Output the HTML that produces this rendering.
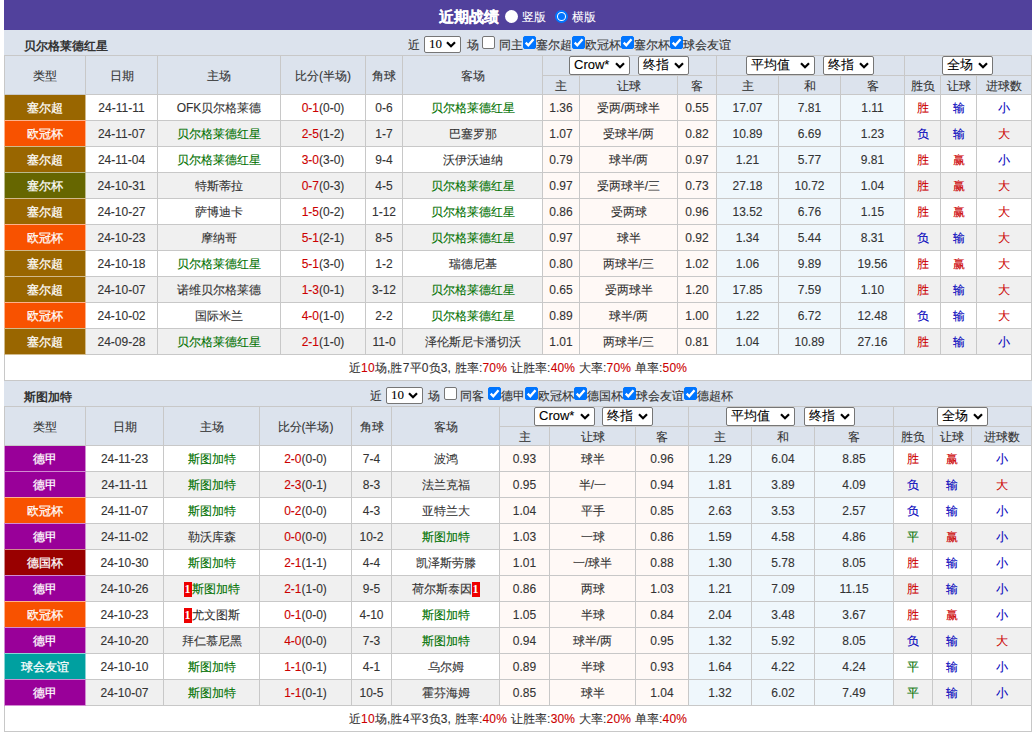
<!DOCTYPE html><html><head><meta charset="utf-8"><style>
*{margin:0;padding:0;box-sizing:border-box}
html,body{width:1034px;height:734px;overflow:hidden;background:#fff}
body{position:relative;font-family:"Liberation Sans",sans-serif;font-size:12px;color:#333;-webkit-text-stroke:0.1px currentColor}
.a{position:absolute}
.c{position:absolute;display:flex;align-items:center;justify-content:center;white-space:nowrap;line-height:14px}
.t{position:absolute;white-space:nowrap;line-height:16px}
.sel{position:absolute;background:#fff;border:1px solid #767676;border-radius:2px;font-size:13px;line-height:16px;color:#000}
.sel svg{display:block}
.cb{position:absolute;width:13px;height:13px;border:1px solid #767676;border-radius:2px;background:#fff}
.cb.on{background:#0075ff;border-color:#0075ff}
.cb svg{position:absolute;left:-1px;top:-1px}
.rc{display:inline-block;background:#e00;color:#fff;font-weight:bold;font-family:'Liberation Serif',serif;width:8px;text-align:center;line-height:15px;height:14px;vertical-align:top;box-shadow:0 1px 0 #e00;-webkit-text-stroke:0}
</style></head><body>
<div class="a" style="left:4px;top:0px;width:1028px;height:30px;background:#51419c;"></div>
<div class="t" style="left:439px;top:8px;font-size:15px;font-weight:bold;color:#fff;line-height:18px;-webkit-text-stroke:0.2px #fff;">近期战绩</div>
<div class="a" style="left:505px;top:10px;width:13px;height:13px;border-radius:50%;background:#fff"></div>
<div class="t" style="left:522px;top:9px;color:#fff;">竖版</div>
<div class="a" style="left:555px;top:10px;width:13px;height:13px;border-radius:50%;background:#fff;border:2px solid #0075ff"><div class="a" style="left:1px;top:1px;width:7px;height:7px;border-radius:50%;background:#0075ff"></div></div>
<div class="t" style="left:572px;top:9px;color:#fff;">横版</div>
<div class="a" style="left:4px;top:30px;width:1028px;height:25px;background:#dce3ed;"></div>
<div class="t" style="left:24px;top:38px;font-weight:bold;-webkit-text-stroke:0;">贝尔格莱德红星</div>
<div class="t" style="left:408px;top:37px;">近</div>
<div class="sel" style="left:424px;top:36px;width:37px;height:17px;font-family:'Liberation Serif',serif;"><span style="position:absolute;left:4px;top:-1px">10</span><svg style="position:absolute;right:4px;top:4px" width="10" height="7" viewBox="0 0 10 7"><path d="M1 1.3 L5 5.3 L9 1.3" fill="none" stroke="#000" stroke-width="2.2"/></svg></div>
<div class="t" style="left:467px;top:37px;">场</div>
<div class="cb" style="left:482px;top:36px"></div>
<div class="t" style="left:499px;top:37px;">同主</div>
<div class="cb on" style="left:523px;top:36px"><svg width="13" height="13" viewBox="0 0 13 13"><path d="M2.7 6.6 L5.3 9.3 L10.5 3.2" fill="none" stroke="#fff" stroke-width="2.3"/></svg></div>
<div class="t" style="left:536px;top:37px;">塞尔超</div>
<div class="cb on" style="left:572px;top:36px"><svg width="13" height="13" viewBox="0 0 13 13"><path d="M2.7 6.6 L5.3 9.3 L10.5 3.2" fill="none" stroke="#fff" stroke-width="2.3"/></svg></div>
<div class="t" style="left:585px;top:37px;">欧冠杯</div>
<div class="cb on" style="left:621px;top:36px"><svg width="13" height="13" viewBox="0 0 13 13"><path d="M2.7 6.6 L5.3 9.3 L10.5 3.2" fill="none" stroke="#fff" stroke-width="2.3"/></svg></div>
<div class="t" style="left:634px;top:37px;">塞尔杯</div>
<div class="cb on" style="left:670px;top:36px"><svg width="13" height="13" viewBox="0 0 13 13"><path d="M2.7 6.6 L5.3 9.3 L10.5 3.2" fill="none" stroke="#fff" stroke-width="2.3"/></svg></div>
<div class="t" style="left:683px;top:37px;">球会友谊</div>
<div class="a" style="left:4px;top:55px;width:1028px;height:39px;background:#dce3ed;"></div>
<div class="c" style="left:5px;top:95px;width:80px;height:25px;background:#996600;color:#fff;-webkit-text-stroke:0.25px #fff;"><span>塞尔超</span></div>
<div class="c" style="left:86px;top:95px;width:71px;height:25px;background:#fff;"><span>24-11-11</span></div>
<div class="c" style="left:158px;top:95px;width:122px;height:25px;background:#fff;"><span>OFK贝尔格莱德</span></div>
<div class="c" style="left:281px;top:95px;width:84px;height:25px;background:#fff;"><span><span style="color:#cc0000">0-1</span>(0-0)</span></div>
<div class="c" style="left:366px;top:95px;width:36px;height:25px;background:#fff;"><span>0-6</span></div>
<div class="c" style="left:403px;top:95px;width:139px;height:25px;background:#fff;"><span><span style="color:#007000">贝尔格莱德红星</span></span></div>
<div class="c" style="left:543px;top:95px;width:36px;height:25px;background:#fff9f6;"><span>1.36</span></div>
<div class="c" style="left:580px;top:95px;width:97px;height:25px;background:#fff9f6;"><span>受两/两球半</span></div>
<div class="c" style="left:678px;top:95px;width:38px;height:25px;background:#fff9f6;"><span>0.55</span></div>
<div class="c" style="left:717px;top:95px;width:61px;height:25px;background:#eff7fc;"><span>17.07</span></div>
<div class="c" style="left:779px;top:95px;width:61px;height:25px;background:#eff7fc;"><span>7.81</span></div>
<div class="c" style="left:841px;top:95px;width:63px;height:25px;background:#eff7fc;"><span>1.11</span></div>
<div class="c" style="left:905px;top:95px;width:35px;height:25px;background:#fff;"><span><span style="color:#cc0000">胜</span></span></div>
<div class="c" style="left:941px;top:95px;width:35px;height:25px;background:#fff;"><span><span style="color:#0000bb">输</span></span></div>
<div class="c" style="left:977px;top:95px;width:54px;height:25px;background:#fff;"><span><span style="color:#0000bb">小</span></span></div>
<div class="c" style="left:5px;top:121px;width:80px;height:25px;background:#f85200;color:#fff;-webkit-text-stroke:0.25px #fff;"><span>欧冠杯</span></div>
<div class="c" style="left:86px;top:121px;width:71px;height:25px;background:#f0f0f0;"><span>24-11-07</span></div>
<div class="c" style="left:158px;top:121px;width:122px;height:25px;background:#f0f0f0;"><span><span style="color:#007000">贝尔格莱德红星</span></span></div>
<div class="c" style="left:281px;top:121px;width:84px;height:25px;background:#f0f0f0;"><span><span style="color:#cc0000">2-5</span>(1-2)</span></div>
<div class="c" style="left:366px;top:121px;width:36px;height:25px;background:#f0f0f0;"><span>1-7</span></div>
<div class="c" style="left:403px;top:121px;width:139px;height:25px;background:#f0f0f0;"><span>巴塞罗那</span></div>
<div class="c" style="left:543px;top:121px;width:36px;height:25px;background:#fff9f6;"><span>1.07</span></div>
<div class="c" style="left:580px;top:121px;width:97px;height:25px;background:#fff9f6;"><span>受球半/两</span></div>
<div class="c" style="left:678px;top:121px;width:38px;height:25px;background:#fff9f6;"><span>0.82</span></div>
<div class="c" style="left:717px;top:121px;width:61px;height:25px;background:#eff7fc;"><span>10.89</span></div>
<div class="c" style="left:779px;top:121px;width:61px;height:25px;background:#eff7fc;"><span>6.69</span></div>
<div class="c" style="left:841px;top:121px;width:63px;height:25px;background:#eff7fc;"><span>1.23</span></div>
<div class="c" style="left:905px;top:121px;width:35px;height:25px;background:#f0f0f0;"><span><span style="color:#0000bb">负</span></span></div>
<div class="c" style="left:941px;top:121px;width:35px;height:25px;background:#f0f0f0;"><span><span style="color:#0000bb">输</span></span></div>
<div class="c" style="left:977px;top:121px;width:54px;height:25px;background:#f0f0f0;"><span><span style="color:#cc0000">大</span></span></div>
<div class="c" style="left:5px;top:147px;width:80px;height:25px;background:#996600;color:#fff;-webkit-text-stroke:0.25px #fff;"><span>塞尔超</span></div>
<div class="c" style="left:86px;top:147px;width:71px;height:25px;background:#fff;"><span>24-11-04</span></div>
<div class="c" style="left:158px;top:147px;width:122px;height:25px;background:#fff;"><span><span style="color:#007000">贝尔格莱德红星</span></span></div>
<div class="c" style="left:281px;top:147px;width:84px;height:25px;background:#fff;"><span><span style="color:#cc0000">3-0</span>(3-0)</span></div>
<div class="c" style="left:366px;top:147px;width:36px;height:25px;background:#fff;"><span>9-4</span></div>
<div class="c" style="left:403px;top:147px;width:139px;height:25px;background:#fff;"><span>沃伊沃迪纳</span></div>
<div class="c" style="left:543px;top:147px;width:36px;height:25px;background:#fff9f6;"><span>0.79</span></div>
<div class="c" style="left:580px;top:147px;width:97px;height:25px;background:#fff9f6;"><span>球半/两</span></div>
<div class="c" style="left:678px;top:147px;width:38px;height:25px;background:#fff9f6;"><span>0.97</span></div>
<div class="c" style="left:717px;top:147px;width:61px;height:25px;background:#eff7fc;"><span>1.21</span></div>
<div class="c" style="left:779px;top:147px;width:61px;height:25px;background:#eff7fc;"><span>5.77</span></div>
<div class="c" style="left:841px;top:147px;width:63px;height:25px;background:#eff7fc;"><span>9.81</span></div>
<div class="c" style="left:905px;top:147px;width:35px;height:25px;background:#fff;"><span><span style="color:#cc0000">胜</span></span></div>
<div class="c" style="left:941px;top:147px;width:35px;height:25px;background:#fff;"><span><span style="color:#cc0000">赢</span></span></div>
<div class="c" style="left:977px;top:147px;width:54px;height:25px;background:#fff;"><span><span style="color:#0000bb">小</span></span></div>
<div class="c" style="left:5px;top:173px;width:80px;height:25px;background:#666600;color:#fff;-webkit-text-stroke:0.25px #fff;"><span>塞尔杯</span></div>
<div class="c" style="left:86px;top:173px;width:71px;height:25px;background:#f0f0f0;"><span>24-10-31</span></div>
<div class="c" style="left:158px;top:173px;width:122px;height:25px;background:#f0f0f0;"><span>特斯蒂拉</span></div>
<div class="c" style="left:281px;top:173px;width:84px;height:25px;background:#f0f0f0;"><span><span style="color:#cc0000">0-7</span>(0-3)</span></div>
<div class="c" style="left:366px;top:173px;width:36px;height:25px;background:#f0f0f0;"><span>4-5</span></div>
<div class="c" style="left:403px;top:173px;width:139px;height:25px;background:#f0f0f0;"><span><span style="color:#007000">贝尔格莱德红星</span></span></div>
<div class="c" style="left:543px;top:173px;width:36px;height:25px;background:#fff9f6;"><span>0.97</span></div>
<div class="c" style="left:580px;top:173px;width:97px;height:25px;background:#fff9f6;"><span>受两球半/三</span></div>
<div class="c" style="left:678px;top:173px;width:38px;height:25px;background:#fff9f6;"><span>0.73</span></div>
<div class="c" style="left:717px;top:173px;width:61px;height:25px;background:#eff7fc;"><span>27.18</span></div>
<div class="c" style="left:779px;top:173px;width:61px;height:25px;background:#eff7fc;"><span>10.72</span></div>
<div class="c" style="left:841px;top:173px;width:63px;height:25px;background:#eff7fc;"><span>1.04</span></div>
<div class="c" style="left:905px;top:173px;width:35px;height:25px;background:#f0f0f0;"><span><span style="color:#cc0000">胜</span></span></div>
<div class="c" style="left:941px;top:173px;width:35px;height:25px;background:#f0f0f0;"><span><span style="color:#cc0000">赢</span></span></div>
<div class="c" style="left:977px;top:173px;width:54px;height:25px;background:#f0f0f0;"><span><span style="color:#cc0000">大</span></span></div>
<div class="c" style="left:5px;top:199px;width:80px;height:25px;background:#996600;color:#fff;-webkit-text-stroke:0.25px #fff;"><span>塞尔超</span></div>
<div class="c" style="left:86px;top:199px;width:71px;height:25px;background:#fff;"><span>24-10-27</span></div>
<div class="c" style="left:158px;top:199px;width:122px;height:25px;background:#fff;"><span>萨博迪卡</span></div>
<div class="c" style="left:281px;top:199px;width:84px;height:25px;background:#fff;"><span><span style="color:#cc0000">1-5</span>(0-2)</span></div>
<div class="c" style="left:366px;top:199px;width:36px;height:25px;background:#fff;"><span>1-12</span></div>
<div class="c" style="left:403px;top:199px;width:139px;height:25px;background:#fff;"><span><span style="color:#007000">贝尔格莱德红星</span></span></div>
<div class="c" style="left:543px;top:199px;width:36px;height:25px;background:#fff9f6;"><span>0.86</span></div>
<div class="c" style="left:580px;top:199px;width:97px;height:25px;background:#fff9f6;"><span>受两球</span></div>
<div class="c" style="left:678px;top:199px;width:38px;height:25px;background:#fff9f6;"><span>0.96</span></div>
<div class="c" style="left:717px;top:199px;width:61px;height:25px;background:#eff7fc;"><span>13.52</span></div>
<div class="c" style="left:779px;top:199px;width:61px;height:25px;background:#eff7fc;"><span>6.76</span></div>
<div class="c" style="left:841px;top:199px;width:63px;height:25px;background:#eff7fc;"><span>1.15</span></div>
<div class="c" style="left:905px;top:199px;width:35px;height:25px;background:#fff;"><span><span style="color:#cc0000">胜</span></span></div>
<div class="c" style="left:941px;top:199px;width:35px;height:25px;background:#fff;"><span><span style="color:#cc0000">赢</span></span></div>
<div class="c" style="left:977px;top:199px;width:54px;height:25px;background:#fff;"><span><span style="color:#cc0000">大</span></span></div>
<div class="c" style="left:5px;top:225px;width:80px;height:25px;background:#f85200;color:#fff;-webkit-text-stroke:0.25px #fff;"><span>欧冠杯</span></div>
<div class="c" style="left:86px;top:225px;width:71px;height:25px;background:#f0f0f0;"><span>24-10-23</span></div>
<div class="c" style="left:158px;top:225px;width:122px;height:25px;background:#f0f0f0;"><span>摩纳哥</span></div>
<div class="c" style="left:281px;top:225px;width:84px;height:25px;background:#f0f0f0;"><span><span style="color:#cc0000">5-1</span>(2-1)</span></div>
<div class="c" style="left:366px;top:225px;width:36px;height:25px;background:#f0f0f0;"><span>8-5</span></div>
<div class="c" style="left:403px;top:225px;width:139px;height:25px;background:#f0f0f0;"><span><span style="color:#007000">贝尔格莱德红星</span></span></div>
<div class="c" style="left:543px;top:225px;width:36px;height:25px;background:#fff9f6;"><span>0.97</span></div>
<div class="c" style="left:580px;top:225px;width:97px;height:25px;background:#fff9f6;"><span>球半</span></div>
<div class="c" style="left:678px;top:225px;width:38px;height:25px;background:#fff9f6;"><span>0.92</span></div>
<div class="c" style="left:717px;top:225px;width:61px;height:25px;background:#eff7fc;"><span>1.34</span></div>
<div class="c" style="left:779px;top:225px;width:61px;height:25px;background:#eff7fc;"><span>5.44</span></div>
<div class="c" style="left:841px;top:225px;width:63px;height:25px;background:#eff7fc;"><span>8.31</span></div>
<div class="c" style="left:905px;top:225px;width:35px;height:25px;background:#f0f0f0;"><span><span style="color:#0000bb">负</span></span></div>
<div class="c" style="left:941px;top:225px;width:35px;height:25px;background:#f0f0f0;"><span><span style="color:#0000bb">输</span></span></div>
<div class="c" style="left:977px;top:225px;width:54px;height:25px;background:#f0f0f0;"><span><span style="color:#cc0000">大</span></span></div>
<div class="c" style="left:5px;top:251px;width:80px;height:25px;background:#996600;color:#fff;-webkit-text-stroke:0.25px #fff;"><span>塞尔超</span></div>
<div class="c" style="left:86px;top:251px;width:71px;height:25px;background:#fff;"><span>24-10-18</span></div>
<div class="c" style="left:158px;top:251px;width:122px;height:25px;background:#fff;"><span><span style="color:#007000">贝尔格莱德红星</span></span></div>
<div class="c" style="left:281px;top:251px;width:84px;height:25px;background:#fff;"><span><span style="color:#cc0000">5-1</span>(3-0)</span></div>
<div class="c" style="left:366px;top:251px;width:36px;height:25px;background:#fff;"><span>1-2</span></div>
<div class="c" style="left:403px;top:251px;width:139px;height:25px;background:#fff;"><span>瑞德尼基</span></div>
<div class="c" style="left:543px;top:251px;width:36px;height:25px;background:#fff9f6;"><span>0.80</span></div>
<div class="c" style="left:580px;top:251px;width:97px;height:25px;background:#fff9f6;"><span>两球半/三</span></div>
<div class="c" style="left:678px;top:251px;width:38px;height:25px;background:#fff9f6;"><span>1.02</span></div>
<div class="c" style="left:717px;top:251px;width:61px;height:25px;background:#eff7fc;"><span>1.06</span></div>
<div class="c" style="left:779px;top:251px;width:61px;height:25px;background:#eff7fc;"><span>9.89</span></div>
<div class="c" style="left:841px;top:251px;width:63px;height:25px;background:#eff7fc;"><span>19.56</span></div>
<div class="c" style="left:905px;top:251px;width:35px;height:25px;background:#fff;"><span><span style="color:#cc0000">胜</span></span></div>
<div class="c" style="left:941px;top:251px;width:35px;height:25px;background:#fff;"><span><span style="color:#cc0000">赢</span></span></div>
<div class="c" style="left:977px;top:251px;width:54px;height:25px;background:#fff;"><span><span style="color:#cc0000">大</span></span></div>
<div class="c" style="left:5px;top:277px;width:80px;height:25px;background:#996600;color:#fff;-webkit-text-stroke:0.25px #fff;"><span>塞尔超</span></div>
<div class="c" style="left:86px;top:277px;width:71px;height:25px;background:#f0f0f0;"><span>24-10-07</span></div>
<div class="c" style="left:158px;top:277px;width:122px;height:25px;background:#f0f0f0;"><span>诺维贝尔格莱德</span></div>
<div class="c" style="left:281px;top:277px;width:84px;height:25px;background:#f0f0f0;"><span><span style="color:#cc0000">1-3</span>(0-1)</span></div>
<div class="c" style="left:366px;top:277px;width:36px;height:25px;background:#f0f0f0;"><span>3-12</span></div>
<div class="c" style="left:403px;top:277px;width:139px;height:25px;background:#f0f0f0;"><span><span style="color:#007000">贝尔格莱德红星</span></span></div>
<div class="c" style="left:543px;top:277px;width:36px;height:25px;background:#fff9f6;"><span>0.65</span></div>
<div class="c" style="left:580px;top:277px;width:97px;height:25px;background:#fff9f6;"><span>受两球半</span></div>
<div class="c" style="left:678px;top:277px;width:38px;height:25px;background:#fff9f6;"><span>1.20</span></div>
<div class="c" style="left:717px;top:277px;width:61px;height:25px;background:#eff7fc;"><span>17.85</span></div>
<div class="c" style="left:779px;top:277px;width:61px;height:25px;background:#eff7fc;"><span>7.59</span></div>
<div class="c" style="left:841px;top:277px;width:63px;height:25px;background:#eff7fc;"><span>1.10</span></div>
<div class="c" style="left:905px;top:277px;width:35px;height:25px;background:#f0f0f0;"><span><span style="color:#cc0000">胜</span></span></div>
<div class="c" style="left:941px;top:277px;width:35px;height:25px;background:#f0f0f0;"><span><span style="color:#0000bb">输</span></span></div>
<div class="c" style="left:977px;top:277px;width:54px;height:25px;background:#f0f0f0;"><span><span style="color:#cc0000">大</span></span></div>
<div class="c" style="left:5px;top:303px;width:80px;height:25px;background:#f85200;color:#fff;-webkit-text-stroke:0.25px #fff;"><span>欧冠杯</span></div>
<div class="c" style="left:86px;top:303px;width:71px;height:25px;background:#fff;"><span>24-10-02</span></div>
<div class="c" style="left:158px;top:303px;width:122px;height:25px;background:#fff;"><span>国际米兰</span></div>
<div class="c" style="left:281px;top:303px;width:84px;height:25px;background:#fff;"><span><span style="color:#cc0000">4-0</span>(1-0)</span></div>
<div class="c" style="left:366px;top:303px;width:36px;height:25px;background:#fff;"><span>2-2</span></div>
<div class="c" style="left:403px;top:303px;width:139px;height:25px;background:#fff;"><span><span style="color:#007000">贝尔格莱德红星</span></span></div>
<div class="c" style="left:543px;top:303px;width:36px;height:25px;background:#fff9f6;"><span>0.89</span></div>
<div class="c" style="left:580px;top:303px;width:97px;height:25px;background:#fff9f6;"><span>球半/两</span></div>
<div class="c" style="left:678px;top:303px;width:38px;height:25px;background:#fff9f6;"><span>1.00</span></div>
<div class="c" style="left:717px;top:303px;width:61px;height:25px;background:#eff7fc;"><span>1.22</span></div>
<div class="c" style="left:779px;top:303px;width:61px;height:25px;background:#eff7fc;"><span>6.72</span></div>
<div class="c" style="left:841px;top:303px;width:63px;height:25px;background:#eff7fc;"><span>12.48</span></div>
<div class="c" style="left:905px;top:303px;width:35px;height:25px;background:#fff;"><span><span style="color:#0000bb">负</span></span></div>
<div class="c" style="left:941px;top:303px;width:35px;height:25px;background:#fff;"><span><span style="color:#0000bb">输</span></span></div>
<div class="c" style="left:977px;top:303px;width:54px;height:25px;background:#fff;"><span><span style="color:#cc0000">大</span></span></div>
<div class="c" style="left:5px;top:329px;width:80px;height:25px;background:#996600;color:#fff;-webkit-text-stroke:0.25px #fff;"><span>塞尔超</span></div>
<div class="c" style="left:86px;top:329px;width:71px;height:25px;background:#f0f0f0;"><span>24-09-28</span></div>
<div class="c" style="left:158px;top:329px;width:122px;height:25px;background:#f0f0f0;"><span><span style="color:#007000">贝尔格莱德红星</span></span></div>
<div class="c" style="left:281px;top:329px;width:84px;height:25px;background:#f0f0f0;"><span><span style="color:#cc0000">2-1</span>(1-0)</span></div>
<div class="c" style="left:366px;top:329px;width:36px;height:25px;background:#f0f0f0;"><span>11-0</span></div>
<div class="c" style="left:403px;top:329px;width:139px;height:25px;background:#f0f0f0;"><span>泽伦斯尼卡潘切沃</span></div>
<div class="c" style="left:543px;top:329px;width:36px;height:25px;background:#fff9f6;"><span>1.01</span></div>
<div class="c" style="left:580px;top:329px;width:97px;height:25px;background:#fff9f6;"><span>两球半/三</span></div>
<div class="c" style="left:678px;top:329px;width:38px;height:25px;background:#fff9f6;"><span>0.81</span></div>
<div class="c" style="left:717px;top:329px;width:61px;height:25px;background:#eff7fc;"><span>1.04</span></div>
<div class="c" style="left:779px;top:329px;width:61px;height:25px;background:#eff7fc;"><span>10.89</span></div>
<div class="c" style="left:841px;top:329px;width:63px;height:25px;background:#eff7fc;"><span>27.16</span></div>
<div class="c" style="left:905px;top:329px;width:35px;height:25px;background:#f0f0f0;"><span><span style="color:#cc0000">胜</span></span></div>
<div class="c" style="left:941px;top:329px;width:35px;height:25px;background:#f0f0f0;"><span><span style="color:#0000bb">输</span></span></div>
<div class="c" style="left:977px;top:329px;width:54px;height:25px;background:#f0f0f0;"><span><span style="color:#0000bb">小</span></span></div>
<div class="c" style="left:5px;top:355px;width:1026px;height:25px;background:#fff;letter-spacing:0.18px"><span>近<span style="color:#cc0000">10</span>场,胜7平0负3, 胜率:<span style="color:#cc0000">70%</span> 让胜率:<span style="color:#cc0000">40%</span> 大率:<span style="color:#cc0000">70%</span> 单率:<span style="color:#cc0000">50%</span></span></div>
<div class="a" style="left:4px;top:55px;width:1028px;height:1px;background:#c8c8c8;"></div>
<div class="a" style="left:542px;top:75px;width:489px;height:1px;background:#c8c8c8;"></div>
<div class="a" style="left:4px;top:94px;width:1028px;height:1px;background:#c8c8c8;"></div>
<div class="a" style="left:4px;top:120px;width:1028px;height:1px;background:#c8c8c8;"></div>
<div class="a" style="left:4px;top:146px;width:1028px;height:1px;background:#c8c8c8;"></div>
<div class="a" style="left:4px;top:172px;width:1028px;height:1px;background:#c8c8c8;"></div>
<div class="a" style="left:4px;top:198px;width:1028px;height:1px;background:#c8c8c8;"></div>
<div class="a" style="left:4px;top:224px;width:1028px;height:1px;background:#c8c8c8;"></div>
<div class="a" style="left:4px;top:250px;width:1028px;height:1px;background:#c8c8c8;"></div>
<div class="a" style="left:4px;top:276px;width:1028px;height:1px;background:#c8c8c8;"></div>
<div class="a" style="left:4px;top:302px;width:1028px;height:1px;background:#c8c8c8;"></div>
<div class="a" style="left:4px;top:328px;width:1028px;height:1px;background:#c8c8c8;"></div>
<div class="a" style="left:4px;top:354px;width:1028px;height:1px;background:#c8c8c8;"></div>
<div class="a" style="left:4px;top:380px;width:1028px;height:1px;background:#c8c8c8;"></div>
<div class="a" style="left:4px;top:55px;width:1px;height:326px;background:#c8c8c8;"></div>
<div class="a" style="left:85px;top:55px;width:1px;height:300px;background:#c8c8c8;"></div>
<div class="a" style="left:157px;top:55px;width:1px;height:300px;background:#c8c8c8;"></div>
<div class="a" style="left:280px;top:55px;width:1px;height:300px;background:#c8c8c8;"></div>
<div class="a" style="left:365px;top:55px;width:1px;height:300px;background:#c8c8c8;"></div>
<div class="a" style="left:402px;top:55px;width:1px;height:300px;background:#c8c8c8;"></div>
<div class="a" style="left:542px;top:55px;width:1px;height:300px;background:#c8c8c8;"></div>
<div class="a" style="left:579px;top:75px;width:1px;height:280px;background:#c8c8c8;"></div>
<div class="a" style="left:677px;top:75px;width:1px;height:280px;background:#c8c8c8;"></div>
<div class="a" style="left:716px;top:55px;width:1px;height:300px;background:#c8c8c8;"></div>
<div class="a" style="left:778px;top:75px;width:1px;height:280px;background:#c8c8c8;"></div>
<div class="a" style="left:840px;top:75px;width:1px;height:280px;background:#c8c8c8;"></div>
<div class="a" style="left:904px;top:55px;width:1px;height:300px;background:#c8c8c8;"></div>
<div class="a" style="left:940px;top:75px;width:1px;height:280px;background:#c8c8c8;"></div>
<div class="a" style="left:976px;top:75px;width:1px;height:280px;background:#c8c8c8;"></div>
<div class="a" style="left:1031px;top:55px;width:1px;height:326px;background:#c8c8c8;"></div>
<div class="a" style="left:4px;top:95px;width:1px;height:26px;background:#d1ba8c;"></div>
<div class="a" style="left:85px;top:95px;width:1px;height:26px;background:#d1ba8c;"></div>
<div class="a" style="left:4px;top:120px;width:82px;height:1px;background:#d1ba8c;"></div>
<div class="a" style="left:4px;top:121px;width:1px;height:26px;background:#fcb18c;"></div>
<div class="a" style="left:85px;top:121px;width:1px;height:26px;background:#fcb18c;"></div>
<div class="a" style="left:4px;top:120px;width:82px;height:1px;background:#fcb18c;"></div>
<div class="a" style="left:4px;top:146px;width:82px;height:1px;background:#fcb18c;"></div>
<div class="a" style="left:4px;top:147px;width:1px;height:26px;background:#d1ba8c;"></div>
<div class="a" style="left:85px;top:147px;width:1px;height:26px;background:#d1ba8c;"></div>
<div class="a" style="left:4px;top:146px;width:82px;height:1px;background:#d1ba8c;"></div>
<div class="a" style="left:4px;top:172px;width:82px;height:1px;background:#d1ba8c;"></div>
<div class="a" style="left:4px;top:173px;width:1px;height:26px;background:#baba8c;"></div>
<div class="a" style="left:85px;top:173px;width:1px;height:26px;background:#baba8c;"></div>
<div class="a" style="left:4px;top:172px;width:82px;height:1px;background:#baba8c;"></div>
<div class="a" style="left:4px;top:198px;width:82px;height:1px;background:#baba8c;"></div>
<div class="a" style="left:4px;top:199px;width:1px;height:26px;background:#d1ba8c;"></div>
<div class="a" style="left:85px;top:199px;width:1px;height:26px;background:#d1ba8c;"></div>
<div class="a" style="left:4px;top:198px;width:82px;height:1px;background:#d1ba8c;"></div>
<div class="a" style="left:4px;top:224px;width:82px;height:1px;background:#d1ba8c;"></div>
<div class="a" style="left:4px;top:225px;width:1px;height:26px;background:#fcb18c;"></div>
<div class="a" style="left:85px;top:225px;width:1px;height:26px;background:#fcb18c;"></div>
<div class="a" style="left:4px;top:224px;width:82px;height:1px;background:#fcb18c;"></div>
<div class="a" style="left:4px;top:250px;width:82px;height:1px;background:#fcb18c;"></div>
<div class="a" style="left:4px;top:251px;width:1px;height:26px;background:#d1ba8c;"></div>
<div class="a" style="left:85px;top:251px;width:1px;height:26px;background:#d1ba8c;"></div>
<div class="a" style="left:4px;top:250px;width:82px;height:1px;background:#d1ba8c;"></div>
<div class="a" style="left:4px;top:276px;width:82px;height:1px;background:#d1ba8c;"></div>
<div class="a" style="left:4px;top:277px;width:1px;height:26px;background:#d1ba8c;"></div>
<div class="a" style="left:85px;top:277px;width:1px;height:26px;background:#d1ba8c;"></div>
<div class="a" style="left:4px;top:276px;width:82px;height:1px;background:#d1ba8c;"></div>
<div class="a" style="left:4px;top:302px;width:82px;height:1px;background:#d1ba8c;"></div>
<div class="a" style="left:4px;top:303px;width:1px;height:26px;background:#fcb18c;"></div>
<div class="a" style="left:85px;top:303px;width:1px;height:26px;background:#fcb18c;"></div>
<div class="a" style="left:4px;top:302px;width:82px;height:1px;background:#fcb18c;"></div>
<div class="a" style="left:4px;top:328px;width:82px;height:1px;background:#fcb18c;"></div>
<div class="a" style="left:4px;top:329px;width:1px;height:26px;background:#d1ba8c;"></div>
<div class="a" style="left:85px;top:329px;width:1px;height:26px;background:#d1ba8c;"></div>
<div class="a" style="left:4px;top:328px;width:82px;height:1px;background:#d1ba8c;"></div>
<div class="a" style="left:4px;top:354px;width:82px;height:1px;background:#d1ba8c;"></div>
<div class="c" style="left:5px;top:56px;width:80px;height:38px;padding-top:1px"><span>类型</span></div>
<div class="c" style="left:86px;top:56px;width:71px;height:38px;padding-top:1px"><span>日期</span></div>
<div class="c" style="left:158px;top:56px;width:122px;height:38px;padding-top:1px"><span>主场</span></div>
<div class="c" style="left:281px;top:56px;width:84px;height:38px;padding-top:1px"><span>比分(半场)</span></div>
<div class="c" style="left:366px;top:56px;width:36px;height:38px;padding-top:1px"><span>角球</span></div>
<div class="c" style="left:403px;top:56px;width:139px;height:38px;padding-top:1px"><span>客场</span></div>
<div class="sel" style="left:569px;top:56px;width:61px;height:19px;"><span style="position:absolute;left:4px;top:0px">Crow*</span><svg style="position:absolute;right:4px;top:5px" width="10" height="7" viewBox="0 0 10 7"><path d="M1 1.3 L5 5.3 L9 1.3" fill="none" stroke="#000" stroke-width="2.2"/></svg></div>
<div class="sel" style="left:638px;top:56px;width:51px;height:19px;"><span style="position:absolute;left:4px;top:0px">终指</span><svg style="position:absolute;right:4px;top:5px" width="10" height="7" viewBox="0 0 10 7"><path d="M1 1.3 L5 5.3 L9 1.3" fill="none" stroke="#000" stroke-width="2.2"/></svg></div>
<div class="sel" style="left:746px;top:56px;width:69px;height:19px;"><span style="position:absolute;left:4px;top:0px">平均值</span><svg style="position:absolute;right:4px;top:5px" width="10" height="7" viewBox="0 0 10 7"><path d="M1 1.3 L5 5.3 L9 1.3" fill="none" stroke="#000" stroke-width="2.2"/></svg></div>
<div class="sel" style="left:823px;top:56px;width:51px;height:19px;"><span style="position:absolute;left:4px;top:0px">终指</span><svg style="position:absolute;right:4px;top:5px" width="10" height="7" viewBox="0 0 10 7"><path d="M1 1.3 L5 5.3 L9 1.3" fill="none" stroke="#000" stroke-width="2.2"/></svg></div>
<div class="sel" style="left:942px;top:56px;width:51px;height:19px;"><span style="position:absolute;left:4px;top:0px">全场</span><svg style="position:absolute;right:4px;top:5px" width="10" height="7" viewBox="0 0 10 7"><path d="M1 1.3 L5 5.3 L9 1.3" fill="none" stroke="#000" stroke-width="2.2"/></svg></div>
<div class="c" style="left:543px;top:76px;width:36px;height:18px;padding-top:2px"><span>主</span></div>
<div class="c" style="left:580px;top:76px;width:97px;height:18px;padding-top:2px"><span>让球</span></div>
<div class="c" style="left:678px;top:76px;width:38px;height:18px;padding-top:2px"><span>客</span></div>
<div class="c" style="left:717px;top:76px;width:61px;height:18px;padding-top:2px"><span>主</span></div>
<div class="c" style="left:779px;top:76px;width:61px;height:18px;padding-top:2px"><span>和</span></div>
<div class="c" style="left:841px;top:76px;width:63px;height:18px;padding-top:2px"><span>客</span></div>
<div class="c" style="left:905px;top:76px;width:35px;height:18px;padding-top:2px"><span>胜负</span></div>
<div class="c" style="left:941px;top:76px;width:35px;height:18px;padding-top:2px"><span>让球</span></div>
<div class="c" style="left:977px;top:76px;width:54px;height:18px;padding-top:2px"><span>进球数</span></div>
<div class="a" style="left:4px;top:381px;width:1028px;height:25px;background:#dce3ed;"></div>
<div class="t" style="left:24px;top:389px;font-weight:bold;-webkit-text-stroke:0;">斯图加特</div>
<div class="t" style="left:370px;top:388px;">近</div>
<div class="sel" style="left:386px;top:387px;width:37px;height:17px;font-family:'Liberation Serif',serif;"><span style="position:absolute;left:4px;top:-1px">10</span><svg style="position:absolute;right:4px;top:4px" width="10" height="7" viewBox="0 0 10 7"><path d="M1 1.3 L5 5.3 L9 1.3" fill="none" stroke="#000" stroke-width="2.2"/></svg></div>
<div class="t" style="left:428px;top:388px;">场</div>
<div class="cb" style="left:444px;top:387px"></div>
<div class="t" style="left:460px;top:388px;">同客</div>
<div class="cb on" style="left:488px;top:387px"><svg width="13" height="13" viewBox="0 0 13 13"><path d="M2.7 6.6 L5.3 9.3 L10.5 3.2" fill="none" stroke="#fff" stroke-width="2.3"/></svg></div>
<div class="t" style="left:501px;top:388px;">德甲</div>
<div class="cb on" style="left:525px;top:387px"><svg width="13" height="13" viewBox="0 0 13 13"><path d="M2.7 6.6 L5.3 9.3 L10.5 3.2" fill="none" stroke="#fff" stroke-width="2.3"/></svg></div>
<div class="t" style="left:538px;top:388px;">欧冠杯</div>
<div class="cb on" style="left:574px;top:387px"><svg width="13" height="13" viewBox="0 0 13 13"><path d="M2.7 6.6 L5.3 9.3 L10.5 3.2" fill="none" stroke="#fff" stroke-width="2.3"/></svg></div>
<div class="t" style="left:587px;top:388px;">德国杯</div>
<div class="cb on" style="left:623px;top:387px"><svg width="13" height="13" viewBox="0 0 13 13"><path d="M2.7 6.6 L5.3 9.3 L10.5 3.2" fill="none" stroke="#fff" stroke-width="2.3"/></svg></div>
<div class="t" style="left:636px;top:388px;">球会友谊</div>
<div class="cb on" style="left:684px;top:387px"><svg width="13" height="13" viewBox="0 0 13 13"><path d="M2.7 6.6 L5.3 9.3 L10.5 3.2" fill="none" stroke="#fff" stroke-width="2.3"/></svg></div>
<div class="t" style="left:697px;top:388px;">德超杯</div>
<div class="a" style="left:4px;top:406px;width:1028px;height:39px;background:#dce3ed;"></div>
<div class="c" style="left:5px;top:446px;width:80px;height:25px;background:#990099;color:#fff;-webkit-text-stroke:0.25px #fff;"><span>德甲</span></div>
<div class="c" style="left:86px;top:446px;width:77px;height:25px;background:#fff;"><span>24-11-23</span></div>
<div class="c" style="left:164px;top:446px;width:95px;height:25px;background:#fff;"><span><span style="color:#007000">斯图加特</span></span></div>
<div class="c" style="left:260px;top:446px;width:91px;height:25px;background:#fff;"><span><span style="color:#cc0000">2-0</span>(0-0)</span></div>
<div class="c" style="left:352px;top:446px;width:39px;height:25px;background:#fff;"><span>7-4</span></div>
<div class="c" style="left:392px;top:446px;width:107px;height:25px;background:#fff;"><span>波鸿</span></div>
<div class="c" style="left:500px;top:446px;width:49px;height:25px;background:#fff9f6;"><span>0.93</span></div>
<div class="c" style="left:550px;top:446px;width:85px;height:25px;background:#fff9f6;"><span>球半</span></div>
<div class="c" style="left:636px;top:446px;width:52px;height:25px;background:#fff9f6;"><span>0.96</span></div>
<div class="c" style="left:689px;top:446px;width:62px;height:25px;background:#eff7fc;"><span>1.29</span></div>
<div class="c" style="left:752px;top:446px;width:62px;height:25px;background:#eff7fc;"><span>6.04</span></div>
<div class="c" style="left:815px;top:446px;width:78px;height:25px;background:#eff7fc;"><span>8.85</span></div>
<div class="c" style="left:894px;top:446px;width:38px;height:25px;background:#fff;"><span><span style="color:#cc0000">胜</span></span></div>
<div class="c" style="left:933px;top:446px;width:38px;height:25px;background:#fff;"><span><span style="color:#cc0000">赢</span></span></div>
<div class="c" style="left:972px;top:446px;width:59px;height:25px;background:#fff;"><span><span style="color:#0000bb">小</span></span></div>
<div class="c" style="left:5px;top:472px;width:80px;height:25px;background:#990099;color:#fff;-webkit-text-stroke:0.25px #fff;"><span>德甲</span></div>
<div class="c" style="left:86px;top:472px;width:77px;height:25px;background:#f0f0f0;"><span>24-11-11</span></div>
<div class="c" style="left:164px;top:472px;width:95px;height:25px;background:#f0f0f0;"><span><span style="color:#007000">斯图加特</span></span></div>
<div class="c" style="left:260px;top:472px;width:91px;height:25px;background:#f0f0f0;"><span><span style="color:#cc0000">2-3</span>(0-1)</span></div>
<div class="c" style="left:352px;top:472px;width:39px;height:25px;background:#f0f0f0;"><span>8-3</span></div>
<div class="c" style="left:392px;top:472px;width:107px;height:25px;background:#f0f0f0;"><span>法兰克福</span></div>
<div class="c" style="left:500px;top:472px;width:49px;height:25px;background:#fff9f6;"><span>0.95</span></div>
<div class="c" style="left:550px;top:472px;width:85px;height:25px;background:#fff9f6;"><span>半/一</span></div>
<div class="c" style="left:636px;top:472px;width:52px;height:25px;background:#fff9f6;"><span>0.94</span></div>
<div class="c" style="left:689px;top:472px;width:62px;height:25px;background:#eff7fc;"><span>1.81</span></div>
<div class="c" style="left:752px;top:472px;width:62px;height:25px;background:#eff7fc;"><span>3.89</span></div>
<div class="c" style="left:815px;top:472px;width:78px;height:25px;background:#eff7fc;"><span>4.09</span></div>
<div class="c" style="left:894px;top:472px;width:38px;height:25px;background:#f0f0f0;"><span><span style="color:#0000bb">负</span></span></div>
<div class="c" style="left:933px;top:472px;width:38px;height:25px;background:#f0f0f0;"><span><span style="color:#0000bb">输</span></span></div>
<div class="c" style="left:972px;top:472px;width:59px;height:25px;background:#f0f0f0;"><span><span style="color:#cc0000">大</span></span></div>
<div class="c" style="left:5px;top:498px;width:80px;height:25px;background:#f85200;color:#fff;-webkit-text-stroke:0.25px #fff;"><span>欧冠杯</span></div>
<div class="c" style="left:86px;top:498px;width:77px;height:25px;background:#fff;"><span>24-11-07</span></div>
<div class="c" style="left:164px;top:498px;width:95px;height:25px;background:#fff;"><span><span style="color:#007000">斯图加特</span></span></div>
<div class="c" style="left:260px;top:498px;width:91px;height:25px;background:#fff;"><span><span style="color:#cc0000">0-2</span>(0-0)</span></div>
<div class="c" style="left:352px;top:498px;width:39px;height:25px;background:#fff;"><span>4-3</span></div>
<div class="c" style="left:392px;top:498px;width:107px;height:25px;background:#fff;"><span>亚特兰大</span></div>
<div class="c" style="left:500px;top:498px;width:49px;height:25px;background:#fff9f6;"><span>1.04</span></div>
<div class="c" style="left:550px;top:498px;width:85px;height:25px;background:#fff9f6;"><span>平手</span></div>
<div class="c" style="left:636px;top:498px;width:52px;height:25px;background:#fff9f6;"><span>0.85</span></div>
<div class="c" style="left:689px;top:498px;width:62px;height:25px;background:#eff7fc;"><span>2.63</span></div>
<div class="c" style="left:752px;top:498px;width:62px;height:25px;background:#eff7fc;"><span>3.53</span></div>
<div class="c" style="left:815px;top:498px;width:78px;height:25px;background:#eff7fc;"><span>2.57</span></div>
<div class="c" style="left:894px;top:498px;width:38px;height:25px;background:#fff;"><span><span style="color:#0000bb">负</span></span></div>
<div class="c" style="left:933px;top:498px;width:38px;height:25px;background:#fff;"><span><span style="color:#0000bb">输</span></span></div>
<div class="c" style="left:972px;top:498px;width:59px;height:25px;background:#fff;"><span><span style="color:#0000bb">小</span></span></div>
<div class="c" style="left:5px;top:524px;width:80px;height:25px;background:#990099;color:#fff;-webkit-text-stroke:0.25px #fff;"><span>德甲</span></div>
<div class="c" style="left:86px;top:524px;width:77px;height:25px;background:#f0f0f0;"><span>24-11-02</span></div>
<div class="c" style="left:164px;top:524px;width:95px;height:25px;background:#f0f0f0;"><span>勒沃库森</span></div>
<div class="c" style="left:260px;top:524px;width:91px;height:25px;background:#f0f0f0;"><span><span style="color:#cc0000">0-0</span>(0-0)</span></div>
<div class="c" style="left:352px;top:524px;width:39px;height:25px;background:#f0f0f0;"><span>10-2</span></div>
<div class="c" style="left:392px;top:524px;width:107px;height:25px;background:#f0f0f0;"><span><span style="color:#007000">斯图加特</span></span></div>
<div class="c" style="left:500px;top:524px;width:49px;height:25px;background:#fff9f6;"><span>1.03</span></div>
<div class="c" style="left:550px;top:524px;width:85px;height:25px;background:#fff9f6;"><span>一球</span></div>
<div class="c" style="left:636px;top:524px;width:52px;height:25px;background:#fff9f6;"><span>0.86</span></div>
<div class="c" style="left:689px;top:524px;width:62px;height:25px;background:#eff7fc;"><span>1.59</span></div>
<div class="c" style="left:752px;top:524px;width:62px;height:25px;background:#eff7fc;"><span>4.58</span></div>
<div class="c" style="left:815px;top:524px;width:78px;height:25px;background:#eff7fc;"><span>4.86</span></div>
<div class="c" style="left:894px;top:524px;width:38px;height:25px;background:#f0f0f0;"><span><span style="color:#007000">平</span></span></div>
<div class="c" style="left:933px;top:524px;width:38px;height:25px;background:#f0f0f0;"><span><span style="color:#cc0000">赢</span></span></div>
<div class="c" style="left:972px;top:524px;width:59px;height:25px;background:#f0f0f0;"><span><span style="color:#0000bb">小</span></span></div>
<div class="c" style="left:5px;top:550px;width:80px;height:25px;background:#990000;color:#fff;-webkit-text-stroke:0.25px #fff;"><span>德国杯</span></div>
<div class="c" style="left:86px;top:550px;width:77px;height:25px;background:#fff;"><span>24-10-30</span></div>
<div class="c" style="left:164px;top:550px;width:95px;height:25px;background:#fff;"><span><span style="color:#007000">斯图加特</span></span></div>
<div class="c" style="left:260px;top:550px;width:91px;height:25px;background:#fff;"><span><span style="color:#cc0000">2-1</span>(1-1)</span></div>
<div class="c" style="left:352px;top:550px;width:39px;height:25px;background:#fff;"><span>4-4</span></div>
<div class="c" style="left:392px;top:550px;width:107px;height:25px;background:#fff;"><span>凯泽斯劳滕</span></div>
<div class="c" style="left:500px;top:550px;width:49px;height:25px;background:#fff9f6;"><span>1.01</span></div>
<div class="c" style="left:550px;top:550px;width:85px;height:25px;background:#fff9f6;"><span>一/球半</span></div>
<div class="c" style="left:636px;top:550px;width:52px;height:25px;background:#fff9f6;"><span>0.88</span></div>
<div class="c" style="left:689px;top:550px;width:62px;height:25px;background:#eff7fc;"><span>1.30</span></div>
<div class="c" style="left:752px;top:550px;width:62px;height:25px;background:#eff7fc;"><span>5.78</span></div>
<div class="c" style="left:815px;top:550px;width:78px;height:25px;background:#eff7fc;"><span>8.05</span></div>
<div class="c" style="left:894px;top:550px;width:38px;height:25px;background:#fff;"><span><span style="color:#cc0000">胜</span></span></div>
<div class="c" style="left:933px;top:550px;width:38px;height:25px;background:#fff;"><span><span style="color:#0000bb">输</span></span></div>
<div class="c" style="left:972px;top:550px;width:59px;height:25px;background:#fff;"><span><span style="color:#0000bb">小</span></span></div>
<div class="c" style="left:5px;top:576px;width:80px;height:25px;background:#990099;color:#fff;-webkit-text-stroke:0.25px #fff;"><span>德甲</span></div>
<div class="c" style="left:86px;top:576px;width:77px;height:25px;background:#f0f0f0;"><span>24-10-26</span></div>
<div class="c" style="left:164px;top:576px;width:95px;height:25px;background:#f0f0f0;"><span><span class="rc">1</span><span style="color:#007000">斯图加特</span></span></div>
<div class="c" style="left:260px;top:576px;width:91px;height:25px;background:#f0f0f0;"><span><span style="color:#cc0000">2-1</span>(1-0)</span></div>
<div class="c" style="left:352px;top:576px;width:39px;height:25px;background:#f0f0f0;"><span>9-5</span></div>
<div class="c" style="left:392px;top:576px;width:107px;height:25px;background:#f0f0f0;"><span>荷尔斯泰因<span class="rc">1</span></span></div>
<div class="c" style="left:500px;top:576px;width:49px;height:25px;background:#fff9f6;"><span>0.86</span></div>
<div class="c" style="left:550px;top:576px;width:85px;height:25px;background:#fff9f6;"><span>两球</span></div>
<div class="c" style="left:636px;top:576px;width:52px;height:25px;background:#fff9f6;"><span>1.03</span></div>
<div class="c" style="left:689px;top:576px;width:62px;height:25px;background:#eff7fc;"><span>1.21</span></div>
<div class="c" style="left:752px;top:576px;width:62px;height:25px;background:#eff7fc;"><span>7.09</span></div>
<div class="c" style="left:815px;top:576px;width:78px;height:25px;background:#eff7fc;"><span>11.15</span></div>
<div class="c" style="left:894px;top:576px;width:38px;height:25px;background:#f0f0f0;"><span><span style="color:#cc0000">胜</span></span></div>
<div class="c" style="left:933px;top:576px;width:38px;height:25px;background:#f0f0f0;"><span><span style="color:#0000bb">输</span></span></div>
<div class="c" style="left:972px;top:576px;width:59px;height:25px;background:#f0f0f0;"><span><span style="color:#0000bb">小</span></span></div>
<div class="c" style="left:5px;top:602px;width:80px;height:25px;background:#f85200;color:#fff;-webkit-text-stroke:0.25px #fff;"><span>欧冠杯</span></div>
<div class="c" style="left:86px;top:602px;width:77px;height:25px;background:#fff;"><span>24-10-23</span></div>
<div class="c" style="left:164px;top:602px;width:95px;height:25px;background:#fff;"><span><span class="rc">1</span>尤文图斯</span></div>
<div class="c" style="left:260px;top:602px;width:91px;height:25px;background:#fff;"><span><span style="color:#cc0000">0-1</span>(0-0)</span></div>
<div class="c" style="left:352px;top:602px;width:39px;height:25px;background:#fff;"><span>4-10</span></div>
<div class="c" style="left:392px;top:602px;width:107px;height:25px;background:#fff;"><span><span style="color:#007000">斯图加特</span></span></div>
<div class="c" style="left:500px;top:602px;width:49px;height:25px;background:#fff9f6;"><span>1.05</span></div>
<div class="c" style="left:550px;top:602px;width:85px;height:25px;background:#fff9f6;"><span>半球</span></div>
<div class="c" style="left:636px;top:602px;width:52px;height:25px;background:#fff9f6;"><span>0.84</span></div>
<div class="c" style="left:689px;top:602px;width:62px;height:25px;background:#eff7fc;"><span>2.04</span></div>
<div class="c" style="left:752px;top:602px;width:62px;height:25px;background:#eff7fc;"><span>3.48</span></div>
<div class="c" style="left:815px;top:602px;width:78px;height:25px;background:#eff7fc;"><span>3.67</span></div>
<div class="c" style="left:894px;top:602px;width:38px;height:25px;background:#fff;"><span><span style="color:#cc0000">胜</span></span></div>
<div class="c" style="left:933px;top:602px;width:38px;height:25px;background:#fff;"><span><span style="color:#cc0000">赢</span></span></div>
<div class="c" style="left:972px;top:602px;width:59px;height:25px;background:#fff;"><span><span style="color:#0000bb">小</span></span></div>
<div class="c" style="left:5px;top:628px;width:80px;height:25px;background:#990099;color:#fff;-webkit-text-stroke:0.25px #fff;"><span>德甲</span></div>
<div class="c" style="left:86px;top:628px;width:77px;height:25px;background:#f0f0f0;"><span>24-10-20</span></div>
<div class="c" style="left:164px;top:628px;width:95px;height:25px;background:#f0f0f0;"><span>拜仁慕尼黑</span></div>
<div class="c" style="left:260px;top:628px;width:91px;height:25px;background:#f0f0f0;"><span><span style="color:#cc0000">4-0</span>(0-0)</span></div>
<div class="c" style="left:352px;top:628px;width:39px;height:25px;background:#f0f0f0;"><span>7-3</span></div>
<div class="c" style="left:392px;top:628px;width:107px;height:25px;background:#f0f0f0;"><span><span style="color:#007000">斯图加特</span></span></div>
<div class="c" style="left:500px;top:628px;width:49px;height:25px;background:#fff9f6;"><span>0.94</span></div>
<div class="c" style="left:550px;top:628px;width:85px;height:25px;background:#fff9f6;"><span>球半/两</span></div>
<div class="c" style="left:636px;top:628px;width:52px;height:25px;background:#fff9f6;"><span>0.95</span></div>
<div class="c" style="left:689px;top:628px;width:62px;height:25px;background:#eff7fc;"><span>1.32</span></div>
<div class="c" style="left:752px;top:628px;width:62px;height:25px;background:#eff7fc;"><span>5.92</span></div>
<div class="c" style="left:815px;top:628px;width:78px;height:25px;background:#eff7fc;"><span>8.05</span></div>
<div class="c" style="left:894px;top:628px;width:38px;height:25px;background:#f0f0f0;"><span><span style="color:#0000bb">负</span></span></div>
<div class="c" style="left:933px;top:628px;width:38px;height:25px;background:#f0f0f0;"><span><span style="color:#0000bb">输</span></span></div>
<div class="c" style="left:972px;top:628px;width:59px;height:25px;background:#f0f0f0;"><span><span style="color:#cc0000">大</span></span></div>
<div class="c" style="left:5px;top:654px;width:80px;height:25px;background:#00a0a0;color:#fff;-webkit-text-stroke:0.25px #fff;"><span>球会友谊</span></div>
<div class="c" style="left:86px;top:654px;width:77px;height:25px;background:#fff;"><span>24-10-10</span></div>
<div class="c" style="left:164px;top:654px;width:95px;height:25px;background:#fff;"><span><span style="color:#007000">斯图加特</span></span></div>
<div class="c" style="left:260px;top:654px;width:91px;height:25px;background:#fff;"><span><span style="color:#cc0000">1-1</span>(0-1)</span></div>
<div class="c" style="left:352px;top:654px;width:39px;height:25px;background:#fff;"><span>4-1</span></div>
<div class="c" style="left:392px;top:654px;width:107px;height:25px;background:#fff;"><span>乌尔姆</span></div>
<div class="c" style="left:500px;top:654px;width:49px;height:25px;background:#fff9f6;"><span>0.89</span></div>
<div class="c" style="left:550px;top:654px;width:85px;height:25px;background:#fff9f6;"><span>半球</span></div>
<div class="c" style="left:636px;top:654px;width:52px;height:25px;background:#fff9f6;"><span>0.93</span></div>
<div class="c" style="left:689px;top:654px;width:62px;height:25px;background:#eff7fc;"><span>1.64</span></div>
<div class="c" style="left:752px;top:654px;width:62px;height:25px;background:#eff7fc;"><span>4.22</span></div>
<div class="c" style="left:815px;top:654px;width:78px;height:25px;background:#eff7fc;"><span>4.24</span></div>
<div class="c" style="left:894px;top:654px;width:38px;height:25px;background:#fff;"><span><span style="color:#007000">平</span></span></div>
<div class="c" style="left:933px;top:654px;width:38px;height:25px;background:#fff;"><span><span style="color:#0000bb">输</span></span></div>
<div class="c" style="left:972px;top:654px;width:59px;height:25px;background:#fff;"><span><span style="color:#0000bb">小</span></span></div>
<div class="c" style="left:5px;top:680px;width:80px;height:25px;background:#990099;color:#fff;-webkit-text-stroke:0.25px #fff;"><span>德甲</span></div>
<div class="c" style="left:86px;top:680px;width:77px;height:25px;background:#f0f0f0;"><span>24-10-07</span></div>
<div class="c" style="left:164px;top:680px;width:95px;height:25px;background:#f0f0f0;"><span><span style="color:#007000">斯图加特</span></span></div>
<div class="c" style="left:260px;top:680px;width:91px;height:25px;background:#f0f0f0;"><span><span style="color:#cc0000">1-1</span>(0-1)</span></div>
<div class="c" style="left:352px;top:680px;width:39px;height:25px;background:#f0f0f0;"><span>10-5</span></div>
<div class="c" style="left:392px;top:680px;width:107px;height:25px;background:#f0f0f0;"><span>霍芬海姆</span></div>
<div class="c" style="left:500px;top:680px;width:49px;height:25px;background:#fff9f6;"><span>0.85</span></div>
<div class="c" style="left:550px;top:680px;width:85px;height:25px;background:#fff9f6;"><span>球半</span></div>
<div class="c" style="left:636px;top:680px;width:52px;height:25px;background:#fff9f6;"><span>1.04</span></div>
<div class="c" style="left:689px;top:680px;width:62px;height:25px;background:#eff7fc;"><span>1.32</span></div>
<div class="c" style="left:752px;top:680px;width:62px;height:25px;background:#eff7fc;"><span>6.02</span></div>
<div class="c" style="left:815px;top:680px;width:78px;height:25px;background:#eff7fc;"><span>7.49</span></div>
<div class="c" style="left:894px;top:680px;width:38px;height:25px;background:#f0f0f0;"><span><span style="color:#007000">平</span></span></div>
<div class="c" style="left:933px;top:680px;width:38px;height:25px;background:#f0f0f0;"><span><span style="color:#0000bb">输</span></span></div>
<div class="c" style="left:972px;top:680px;width:59px;height:25px;background:#f0f0f0;"><span><span style="color:#0000bb">小</span></span></div>
<div class="c" style="left:5px;top:706px;width:1026px;height:25px;background:#fff;letter-spacing:0.18px"><span>近<span style="color:#cc0000">10</span>场,胜4平3负3, 胜率:<span style="color:#cc0000">40%</span> 让胜率:<span style="color:#cc0000">30%</span> 大率:<span style="color:#cc0000">20%</span> 单率:<span style="color:#cc0000">40%</span></span></div>
<div class="a" style="left:4px;top:406px;width:1028px;height:1px;background:#c8c8c8;"></div>
<div class="a" style="left:499px;top:426px;width:532px;height:1px;background:#c8c8c8;"></div>
<div class="a" style="left:4px;top:445px;width:1028px;height:1px;background:#c8c8c8;"></div>
<div class="a" style="left:4px;top:471px;width:1028px;height:1px;background:#c8c8c8;"></div>
<div class="a" style="left:4px;top:497px;width:1028px;height:1px;background:#c8c8c8;"></div>
<div class="a" style="left:4px;top:523px;width:1028px;height:1px;background:#c8c8c8;"></div>
<div class="a" style="left:4px;top:549px;width:1028px;height:1px;background:#c8c8c8;"></div>
<div class="a" style="left:4px;top:575px;width:1028px;height:1px;background:#c8c8c8;"></div>
<div class="a" style="left:4px;top:601px;width:1028px;height:1px;background:#c8c8c8;"></div>
<div class="a" style="left:4px;top:627px;width:1028px;height:1px;background:#c8c8c8;"></div>
<div class="a" style="left:4px;top:653px;width:1028px;height:1px;background:#c8c8c8;"></div>
<div class="a" style="left:4px;top:679px;width:1028px;height:1px;background:#c8c8c8;"></div>
<div class="a" style="left:4px;top:705px;width:1028px;height:1px;background:#c8c8c8;"></div>
<div class="a" style="left:4px;top:731px;width:1028px;height:1px;background:#c8c8c8;"></div>
<div class="a" style="left:4px;top:406px;width:1px;height:326px;background:#c8c8c8;"></div>
<div class="a" style="left:85px;top:406px;width:1px;height:300px;background:#c8c8c8;"></div>
<div class="a" style="left:163px;top:406px;width:1px;height:300px;background:#c8c8c8;"></div>
<div class="a" style="left:259px;top:406px;width:1px;height:300px;background:#c8c8c8;"></div>
<div class="a" style="left:351px;top:406px;width:1px;height:300px;background:#c8c8c8;"></div>
<div class="a" style="left:391px;top:406px;width:1px;height:300px;background:#c8c8c8;"></div>
<div class="a" style="left:499px;top:406px;width:1px;height:300px;background:#c8c8c8;"></div>
<div class="a" style="left:549px;top:426px;width:1px;height:280px;background:#c8c8c8;"></div>
<div class="a" style="left:635px;top:426px;width:1px;height:280px;background:#c8c8c8;"></div>
<div class="a" style="left:688px;top:406px;width:1px;height:300px;background:#c8c8c8;"></div>
<div class="a" style="left:751px;top:426px;width:1px;height:280px;background:#c8c8c8;"></div>
<div class="a" style="left:814px;top:426px;width:1px;height:280px;background:#c8c8c8;"></div>
<div class="a" style="left:893px;top:406px;width:1px;height:300px;background:#c8c8c8;"></div>
<div class="a" style="left:932px;top:426px;width:1px;height:280px;background:#c8c8c8;"></div>
<div class="a" style="left:971px;top:426px;width:1px;height:280px;background:#c8c8c8;"></div>
<div class="a" style="left:1031px;top:406px;width:1px;height:326px;background:#c8c8c8;"></div>
<div class="a" style="left:4px;top:446px;width:1px;height:26px;background:#d18cd1;"></div>
<div class="a" style="left:85px;top:446px;width:1px;height:26px;background:#d18cd1;"></div>
<div class="a" style="left:4px;top:471px;width:82px;height:1px;background:#d18cd1;"></div>
<div class="a" style="left:4px;top:472px;width:1px;height:26px;background:#d18cd1;"></div>
<div class="a" style="left:85px;top:472px;width:1px;height:26px;background:#d18cd1;"></div>
<div class="a" style="left:4px;top:471px;width:82px;height:1px;background:#d18cd1;"></div>
<div class="a" style="left:4px;top:497px;width:82px;height:1px;background:#d18cd1;"></div>
<div class="a" style="left:4px;top:498px;width:1px;height:26px;background:#fcb18c;"></div>
<div class="a" style="left:85px;top:498px;width:1px;height:26px;background:#fcb18c;"></div>
<div class="a" style="left:4px;top:497px;width:82px;height:1px;background:#fcb18c;"></div>
<div class="a" style="left:4px;top:523px;width:82px;height:1px;background:#fcb18c;"></div>
<div class="a" style="left:4px;top:524px;width:1px;height:26px;background:#d18cd1;"></div>
<div class="a" style="left:85px;top:524px;width:1px;height:26px;background:#d18cd1;"></div>
<div class="a" style="left:4px;top:523px;width:82px;height:1px;background:#d18cd1;"></div>
<div class="a" style="left:4px;top:549px;width:82px;height:1px;background:#d18cd1;"></div>
<div class="a" style="left:4px;top:550px;width:1px;height:26px;background:#d18c8c;"></div>
<div class="a" style="left:85px;top:550px;width:1px;height:26px;background:#d18c8c;"></div>
<div class="a" style="left:4px;top:549px;width:82px;height:1px;background:#d18c8c;"></div>
<div class="a" style="left:4px;top:575px;width:82px;height:1px;background:#d18c8c;"></div>
<div class="a" style="left:4px;top:576px;width:1px;height:26px;background:#d18cd1;"></div>
<div class="a" style="left:85px;top:576px;width:1px;height:26px;background:#d18cd1;"></div>
<div class="a" style="left:4px;top:575px;width:82px;height:1px;background:#d18cd1;"></div>
<div class="a" style="left:4px;top:601px;width:82px;height:1px;background:#d18cd1;"></div>
<div class="a" style="left:4px;top:602px;width:1px;height:26px;background:#fcb18c;"></div>
<div class="a" style="left:85px;top:602px;width:1px;height:26px;background:#fcb18c;"></div>
<div class="a" style="left:4px;top:601px;width:82px;height:1px;background:#fcb18c;"></div>
<div class="a" style="left:4px;top:627px;width:82px;height:1px;background:#fcb18c;"></div>
<div class="a" style="left:4px;top:628px;width:1px;height:26px;background:#d18cd1;"></div>
<div class="a" style="left:85px;top:628px;width:1px;height:26px;background:#d18cd1;"></div>
<div class="a" style="left:4px;top:627px;width:82px;height:1px;background:#d18cd1;"></div>
<div class="a" style="left:4px;top:653px;width:82px;height:1px;background:#d18cd1;"></div>
<div class="a" style="left:4px;top:654px;width:1px;height:26px;background:#8cd4d4;"></div>
<div class="a" style="left:85px;top:654px;width:1px;height:26px;background:#8cd4d4;"></div>
<div class="a" style="left:4px;top:653px;width:82px;height:1px;background:#8cd4d4;"></div>
<div class="a" style="left:4px;top:679px;width:82px;height:1px;background:#8cd4d4;"></div>
<div class="a" style="left:4px;top:680px;width:1px;height:26px;background:#d18cd1;"></div>
<div class="a" style="left:85px;top:680px;width:1px;height:26px;background:#d18cd1;"></div>
<div class="a" style="left:4px;top:679px;width:82px;height:1px;background:#d18cd1;"></div>
<div class="a" style="left:4px;top:705px;width:82px;height:1px;background:#d18cd1;"></div>
<div class="c" style="left:5px;top:407px;width:80px;height:38px;padding-top:1px"><span>类型</span></div>
<div class="c" style="left:86px;top:407px;width:77px;height:38px;padding-top:1px"><span>日期</span></div>
<div class="c" style="left:164px;top:407px;width:95px;height:38px;padding-top:1px"><span>主场</span></div>
<div class="c" style="left:260px;top:407px;width:91px;height:38px;padding-top:1px"><span>比分(半场)</span></div>
<div class="c" style="left:352px;top:407px;width:39px;height:38px;padding-top:1px"><span>角球</span></div>
<div class="c" style="left:392px;top:407px;width:107px;height:38px;padding-top:1px"><span>客场</span></div>
<div class="sel" style="left:534px;top:407px;width:61px;height:19px;"><span style="position:absolute;left:4px;top:0px">Crow*</span><svg style="position:absolute;right:4px;top:5px" width="10" height="7" viewBox="0 0 10 7"><path d="M1 1.3 L5 5.3 L9 1.3" fill="none" stroke="#000" stroke-width="2.2"/></svg></div>
<div class="sel" style="left:602px;top:407px;width:51px;height:19px;"><span style="position:absolute;left:4px;top:0px">终指</span><svg style="position:absolute;right:4px;top:5px" width="10" height="7" viewBox="0 0 10 7"><path d="M1 1.3 L5 5.3 L9 1.3" fill="none" stroke="#000" stroke-width="2.2"/></svg></div>
<div class="sel" style="left:726px;top:407px;width:69px;height:19px;"><span style="position:absolute;left:4px;top:0px">平均值</span><svg style="position:absolute;right:4px;top:5px" width="10" height="7" viewBox="0 0 10 7"><path d="M1 1.3 L5 5.3 L9 1.3" fill="none" stroke="#000" stroke-width="2.2"/></svg></div>
<div class="sel" style="left:804px;top:407px;width:51px;height:19px;"><span style="position:absolute;left:4px;top:0px">终指</span><svg style="position:absolute;right:4px;top:5px" width="10" height="7" viewBox="0 0 10 7"><path d="M1 1.3 L5 5.3 L9 1.3" fill="none" stroke="#000" stroke-width="2.2"/></svg></div>
<div class="sel" style="left:937px;top:407px;width:51px;height:19px;"><span style="position:absolute;left:4px;top:0px">全场</span><svg style="position:absolute;right:4px;top:5px" width="10" height="7" viewBox="0 0 10 7"><path d="M1 1.3 L5 5.3 L9 1.3" fill="none" stroke="#000" stroke-width="2.2"/></svg></div>
<div class="c" style="left:500px;top:427px;width:49px;height:18px;padding-top:2px"><span>主</span></div>
<div class="c" style="left:550px;top:427px;width:85px;height:18px;padding-top:2px"><span>让球</span></div>
<div class="c" style="left:636px;top:427px;width:52px;height:18px;padding-top:2px"><span>客</span></div>
<div class="c" style="left:689px;top:427px;width:62px;height:18px;padding-top:2px"><span>主</span></div>
<div class="c" style="left:752px;top:427px;width:62px;height:18px;padding-top:2px"><span>和</span></div>
<div class="c" style="left:815px;top:427px;width:78px;height:18px;padding-top:2px"><span>客</span></div>
<div class="c" style="left:894px;top:427px;width:38px;height:18px;padding-top:2px"><span>胜负</span></div>
<div class="c" style="left:933px;top:427px;width:38px;height:18px;padding-top:2px"><span>让球</span></div>
<div class="c" style="left:972px;top:427px;width:59px;height:18px;padding-top:2px"><span>进球数</span></div>
</body></html>
